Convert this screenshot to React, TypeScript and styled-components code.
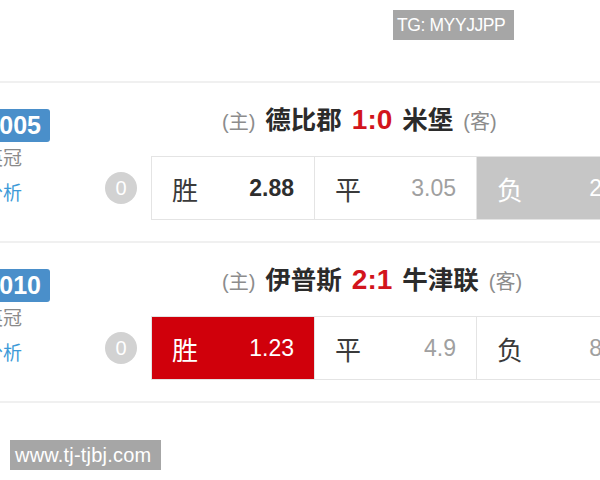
import React from 'react';
import styled, { createGlobalStyle } from 'styled-components';

const GlobalStyle = createGlobalStyle`
  html, body {
    margin: 0;
    padding: 0;
    background: #ffffff;
  }
  body {
    font-family: "Liberation Sans", "Noto Sans CJK SC", sans-serif;
  }
`;

type Odd = { label: string; value: string; tone: 'plain' | 'strong' | 'win' | 'lose' };
type Match = {
  no: string;
  league: string;
  home: string;
  away: string;
  score: string;
  odds: Odd[];
};

const matches: Match[] = [
  {
    no: '005',
    league: '英冠',
    home: '德比郡',
    away: '米堡',
    score: '1:0',
    odds: [
      { label: '胜', value: '2.88', tone: 'strong' },
      { label: '平', value: '3.05', tone: 'plain' },
      { label: '负', value: '2.35', tone: 'lose' },
    ],
  },
  {
    no: '010',
    league: '英冠',
    home: '伊普斯',
    away: '牛津联',
    score: '2:1',
    odds: [
      { label: '胜', value: '1.23', tone: 'win' },
      { label: '平', value: '4.9', tone: 'plain' },
      { label: '负', value: '8.50', tone: 'plain' },
    ],
  },
];

export default function App() {
  return (
    <Page>
      <GlobalStyle />
      <Header />
      {matches.map((m) => (
        <Row key={m.no}>
          <LeftCol>
            <NoBadge>{m.no}</NoBadge>
            <League>{m.league}</League>
            <Analysis>分析</Analysis>
          </LeftCol>
          <Main>
            <Title>
              <Side>(主)</Side>
              <Team>{m.home}</Team>
              <Score>{m.score}</Score>
              <Team>{m.away}</Team>
              <Side>(客)</Side>
            </Title>
            <OddsLine>
              <Handicap>0</Handicap>
              <OddsGroup>
                {m.odds.map((o) => (
                  <OddCell key={o.label} tone={o.tone}>
                    <OddLabel>{o.label}</OddLabel>
                    <OddValue tone={o.tone}>{o.value}</OddValue>
                  </OddCell>
                ))}
              </OddsGroup>
            </OddsLine>
          </Main>
        </Row>
      ))}
      <TgMark>TG: MYYJJPP</TgMark>
      <SiteMark>www.tj-tjbj.com</SiteMark>
    </Page>
  );
}

const Page = styled.div`
  position: relative;
  width: 600px;
  height: 480px;
  overflow: hidden;
  background: #fff;
`;

const Header = styled.div`
  height: 81px;
  border-bottom: 2px solid #f0f0f0;
`;

const Row = styled.div`
  display: flex;
  height: 158px;
  border-bottom: 2px solid #f0f0f0;
`;

const LeftCol = styled.div`
  flex: none;
  width: 94px;
  margin-left: -44px;
  padding-top: 26px;
  display: flex;
  flex-direction: column;
  align-items: center;
`;

const NoBadge = styled.div`
  box-sizing: border-box;
  width: 94px;
  height: 33px;
  padding-right: 9px;
  border-radius: 3px;
  background: #4a8fca;
  color: #fff;
  font-size: 25px;
  font-weight: bold;
  line-height: 33px;
  text-align: right;
`;

const League = styled.div`
  margin-top: 5px;
  font-size: 19px;
  line-height: 24px;
  color: #8a8a8a;
`;

const Analysis = styled.div`
  margin-top: 11px;
  font-size: 19px;
  line-height: 24px;
  color: #3d9ad8;
`;

const Main = styled.div`
  flex: 1;
  display: flex;
  flex-direction: column;
`;

const Title = styled.div`
  display: flex;
  align-items: baseline;
  gap: 10px;
  margin-top: 19px;
  padding-left: 172px;
  height: 36px;
  line-height: 36px;
  white-space: nowrap;
`;

const Side = styled.span`
  font-size: 20px;
  color: #8c8c8c;
`;

const Team = styled.span`
  font-size: 25.5px;
  font-weight: bold;
  color: #2b2b2b;
`;

const Score = styled.span`
  font-size: 28px;
  font-weight: bold;
  color: #d2141c;
`;

const OddsLine = styled.div`
  display: flex;
  align-items: center;
  gap: 14px;
  margin-top: 18px;
  padding-left: 55px;
`;

const Handicap = styled.div`
  flex: none;
  width: 32px;
  height: 32px;
  border-radius: 50%;
  background: #d2d2d2;
  color: #fff;
  font-size: 20px;
  line-height: 32px;
  text-align: center;
`;

const OddsGroup = styled.div`
  display: flex;
  flex: none;
  border: 1px solid #e4e4e4;
`;

const OddCell = styled.div<{ tone: Odd['tone'] }>`
  box-sizing: border-box;
  width: 162px;
  height: 62px;
  display: flex;
  align-items: center;
  justify-content: space-between;
  padding: 0 20px 0 20px;
  & + & {
    border-left: 1px solid #e4e4e4;
  }
  &:last-child {
    width: 178px;
  }
  background: ${(p) => (p.tone === 'win' ? '#d0000b' : p.tone === 'lose' ? '#c6c6c6' : '#fff')};
  color: ${(p) => (p.tone === 'win' || p.tone === 'lose' ? '#fff' : '#3a3a3a')};
`;

const OddLabel = styled.span`
  font-size: 26px;
`;

const OddValue = styled.span<{ tone: Odd['tone'] }>`
  font-size: 23px;
  font-weight: ${(p) => (p.tone === 'strong' ? 'bold' : 'normal')};
  color: ${(p) =>
    p.tone === 'strong' ? '#2e2e2e' : p.tone === 'plain' ? '#a0a0a0' : '#fff'};
`;

const TgMark = styled.div`
  position: absolute;
  top: 10px;
  left: 393px;
  width: 121px;
  height: 30px;
  box-sizing: border-box;
  padding-left: 4px;
  background: #a6a6a6;
  color: #fff;
  font-size: 17.5px;
  letter-spacing: -0.4px;
  line-height: 30px;
`;

const SiteMark = styled.div`
  position: absolute;
  top: 440px;
  left: 10px;
  width: 151px;
  height: 30px;
  box-sizing: border-box;
  padding-left: 5px;
  background: #a6a6a6;
  color: #fff;
  font-size: 20px;
  letter-spacing: 0.2px;
  line-height: 30px;
`;
